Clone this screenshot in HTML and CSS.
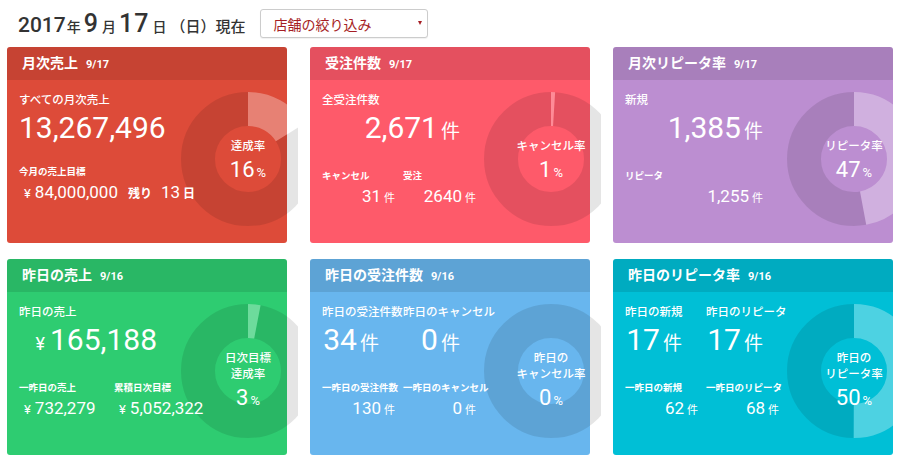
FILE: index.html
```html
<!DOCTYPE html>
<html lang="ja">
<head>
<meta charset="utf-8">
<title>ダッシュボード</title>
<link rel="stylesheet" href="styles.css">
</head>
<body>
<div class="page">
  <div class="topbar">
    <h1 class="today"><span class="d-num">2017</span><span class="d-unit">年</span><span class="d-big">9</span><span class="d-unit">月</span><span class="d-big">17</span><span class="d-unit">日</span><span class="d-tail">（日）現在</span></h1>
    <div class="shop-select"><span>店舗の絞り込み</span><span class="caret"></span></div>
  </div>

  <div class="grid">
    <!-- 1 -->
    <section class="card c-red">
      <header class="card-head"><span class="ttl">月次売上</span><span class="dt">9/17</span></header>
      <div class="card-body">
        <div class="stats">
          <div class="lbl">すべての月次売上</div>
          <div class="big">13,267,496</div>
          <div class="sub-lbl">今月の売上目標</div>
          <div class="sub-val l"><span class="yen-s">¥</span><span>84,000,000</span><span class="ub rest">残り</span><span>13</span><span class="ub day">日</span></div>
        </div>
        <div class="chart">
          <div class="ring">
            <svg viewBox="0 0 134 134" width="134" height="134">
              <circle class="seg-dark" cx="67" cy="67" r="50" stroke-dasharray="263.89 314.16" stroke-dashoffset="-50.27" transform="rotate(-90 67 67)"/>
              <circle class="seg-light" cx="67" cy="67" r="50" stroke-dasharray="50.27 314.16" transform="rotate(-90 67 67)"/>
            </svg>
            <div class="ring-label"><div class="rl-t">達成率</div><div class="rl-v">16<small>%</small></div></div>
          </div>
        </div>
      </div>
    </section>

    <!-- 2 -->
    <section class="card c-pink">
      <header class="card-head"><span class="ttl">受注件数</span><span class="dt">9/17</span></header>
      <div class="card-body">
        <div class="stats">
          <div class="lbl">全受注件数</div>
          <div class="big">2,671<span class="u">件</span></div>
          <div class="cols">
            <div class="sub-lbl">キャンセル</div>
            <div class="sub-lbl">受注</div>
            <div class="sub-val">31<span class="u">件</span></div>
            <div class="sub-val">2640<span class="u">件</span></div>
          </div>
        </div>
        <div class="chart">
          <div class="ring">
            <svg viewBox="0 0 134 134" width="134" height="134">
              <circle class="seg-dark" cx="67" cy="67" r="50" stroke-dasharray="311.02 314.16" stroke-dashoffset="-3.14" transform="rotate(-90 67 67)"/>
              <circle class="seg-light" cx="67" cy="67" r="50" stroke-dasharray="3.14 314.16" transform="rotate(-90 67 67)"/>
            </svg>
            <div class="ring-label"><div class="rl-t">キャンセル率</div><div class="rl-v">1<small>%</small></div></div>
          </div>
        </div>
      </div>
    </section>

    <!-- 3 -->
    <section class="card c-purple">
      <header class="card-head"><span class="ttl">月次リピータ率</span><span class="dt">9/17</span></header>
      <div class="card-body">
        <div class="stats">
          <div class="lbl">新規</div>
          <div class="big">1,385<span class="u">件</span></div>
          <div class="sub-lbl">リピータ</div>
          <div class="sub-val r">1,255<span class="u">件</span></div>
        </div>
        <div class="chart">
          <div class="ring">
            <svg viewBox="0 0 134 134" width="134" height="134">
              <circle class="seg-dark" cx="67" cy="67" r="50" stroke-dasharray="166.50 314.16" stroke-dashoffset="-147.65" transform="rotate(-90 67 67)"/>
              <circle class="seg-light" cx="67" cy="67" r="50" stroke-dasharray="147.65 314.16" transform="rotate(-90 67 67)"/>
            </svg>
            <div class="ring-label"><div class="rl-t">リピータ率</div><div class="rl-v">47<small>%</small></div></div>
          </div>
        </div>
      </div>
    </section>

    <!-- 4 -->
    <section class="card c-green">
      <header class="card-head"><span class="ttl">昨日の売上</span><span class="dt">9/16</span></header>
      <div class="card-body">
        <div class="stats">
          <div class="lbl">昨日の売上</div>
          <div class="big"><span class="yen-b">¥</span>165,188</div>
          <div class="cols cols-wide">
            <div class="sub-lbl">一昨日の売上</div>
            <div class="sub-lbl">累積日次目標</div>
            <div class="sub-val l"><span class="yen-s">¥</span>732,279</div>
            <div class="sub-val l"><span class="yen-s">¥</span>5,052,322</div>
          </div>
        </div>
        <div class="chart">
          <div class="ring">
            <svg viewBox="0 0 134 134" width="134" height="134">
              <circle class="seg-dark" cx="67" cy="67" r="50" stroke-dasharray="304.73 314.16" stroke-dashoffset="-9.42" transform="rotate(-90 67 67)"/>
              <circle class="seg-light" cx="67" cy="67" r="50" stroke-dasharray="9.42 314.16" transform="rotate(-90 67 67)"/>
            </svg>
            <div class="ring-label"><div class="rl-t">日次目標<br>達成率</div><div class="rl-v">3<small>%</small></div></div>
          </div>
        </div>
      </div>
    </section>

    <!-- 5 -->
    <section class="card c-blue">
      <header class="card-head"><span class="ttl">昨日の受注件数</span><span class="dt">9/16</span></header>
      <div class="card-body">
        <div class="stats">
          <div class="cols">
            <div class="lbl">昨日の受注件数</div>
            <div class="lbl">昨日のキャンセル</div>
            <div class="big">34<span class="u">件</span></div>
            <div class="big">0<span class="u">件</span></div>
            <div class="sub-lbl">一昨日の受注件数</div>
            <div class="sub-lbl">一昨日のキャンセル</div>
            <div class="sub-val">130<span class="u">件</span></div>
            <div class="sub-val">0<span class="u">件</span></div>
          </div>
        </div>
        <div class="chart">
          <div class="ring">
            <svg viewBox="0 0 134 134" width="134" height="134">
              <circle class="seg-dark" cx="67" cy="67" r="50"/>
            </svg>
            <div class="ring-label"><div class="rl-t">昨日の<br>キャンセル率</div><div class="rl-v">0<small>%</small></div></div>
          </div>
        </div>
      </div>
    </section>

    <!-- 6 -->
    <section class="card c-cyan">
      <header class="card-head"><span class="ttl">昨日のリピータ率</span><span class="dt">9/16</span></header>
      <div class="card-body">
        <div class="stats">
          <div class="cols">
            <div class="lbl">昨日の新規</div>
            <div class="lbl">昨日のリピータ</div>
            <div class="big">17<span class="u">件</span></div>
            <div class="big">17<span class="u">件</span></div>
            <div class="sub-lbl">一昨日の新規</div>
            <div class="sub-lbl">一昨日のリピータ</div>
            <div class="sub-val">62<span class="u">件</span></div>
            <div class="sub-val">68<span class="u">件</span></div>
          </div>
        </div>
        <div class="chart">
          <div class="ring">
            <svg viewBox="0 0 134 134" width="134" height="134">
              <circle class="seg-dark" cx="67" cy="67" r="50" stroke-dasharray="157.08 314.16" stroke-dashoffset="-157.08" transform="rotate(-90 67 67)"/>
              <circle class="seg-light" cx="67" cy="67" r="50" stroke-dasharray="157.08 314.16" transform="rotate(-90 67 67)"/>
            </svg>
            <div class="ring-label"><div class="rl-t">昨日の<br>リピータ率</div><div class="rl-v">50<small>%</small></div></div>
          </div>
        </div>
      </div>
    </section>
  </div>
</div>
</body>
</html>
```

FILE: styles.css
```css
* { box-sizing: border-box; }

body {
  margin: 0;
  background: #fff;
  color: #333;
  font-family: Roboto, "Noto Sans CJK JP", sans-serif;
}

.page {
  padding: 0 7px;
}

/* ---------- top bar ---------- */
.topbar {
  height: 47px;
  display: flex;
  align-items: center;
  gap: 15px;
  padding-left: 11px;
}

.today {
  margin: 0;
  display: flex;
  align-items: baseline;
  font-weight: 500;
  line-height: 1;
  color: #333;
  white-space: nowrap;
}

.d-num { font-size: 21px; }
.d-unit { font-size: 14px; margin: 0 1px; }
.d-big { font-size: 25px; margin: 0 2px; letter-spacing: 1px; }
.d-tail { font-size: 15px; margin-left: 3px; }

.shop-select {
  width: 168px;
  height: 29px;
  border: 1px solid #ccc;
  border-radius: 3px;
  box-shadow: 0 1px 1px rgba(0, 0, 0, 0.06);
  display: flex;
  align-items: center;
  justify-content: space-between;
  padding: 0 5px 0 12px;
  font-size: 14px;
  color: #a61e24;
  background: #fff;
}

.caret {
  width: 0;
  height: 0;
  border-left: 2.5px solid transparent;
  border-right: 2.5px solid transparent;
  border-top: 4px solid #a61e24;
  margin-top: -2px;
}

/* ---------- grid ---------- */
.grid {
  display: grid;
  grid-template-columns: repeat(3, 280px);
  grid-template-rows: repeat(2, 196px);
  column-gap: 23px;
  row-gap: 16px;
}

.card {
  border-radius: 3px;
  color: #fff;
  display: flex;
  flex-direction: column;
}

.c-red    { background: #dd4b39; }
.c-pink   { background: #fe5a6a; }
.c-purple { background: #bc8ed1; }
.c-green  { background: #2ecc71; }
.c-blue   { background: #68b6ee; }
.c-cyan   { background: #00bfd6; }

.card-head {
  height: 33px;
  flex: none;
  background: rgba(0, 0, 0, 0.1);
  border-radius: 3px 3px 0 0;
  display: flex;
  align-items: baseline;
  gap: 8px;
  padding-left: 15px;
  line-height: 33px;
}

.ttl { font-size: 14px; font-weight: 700; }
.dt  { font-size: 11px; font-weight: 700; }

.card-body {
  flex: 1;
  display: flex;
}

/* ---------- stats ---------- */
.stats {
  width: 174px;
  flex: none;
  padding: 12px 0 0 12px;
  position: relative;
  z-index: 1;
  white-space: nowrap;
}

.lbl {
  font-size: 11.5px;
  line-height: 16px;
  font-weight: 500;
}

.big {
  font-size: 30px;
  line-height: 40px;
  text-align: right;
  padding-right: 24px;
}

.big .u { font-size: 19px; margin-left: 3px; }
.yen-b { font-size: 18px; margin-right: 5px; }

.sub-lbl {
  font-size: 9.5px;
  line-height: 16px;
  font-weight: 700;
  margin-top: 16px;
}

.sub-val {
  font-size: 17px;
  line-height: 24px;
}

.sub-val .u { font-size: 11px; margin-left: 3px; }
.sub-val.l { padding-left: 5px; text-align: left; }
.sub-val.r { text-align: right; padding-right: 24px; }

.yen-s { font-size: 13px; margin-right: 4px; }
.ub { font-size: 12px; font-weight: 700; }
.ub.rest { margin: 0 9px 0 10px; }
.ub.day { margin-left: 3px; }

.cols {
  display: grid;
  grid-template-columns: 81px 81px;
}

.cols .sub-val { text-align: right; padding-right: 8px; }
.cols .sub-val.l { text-align: left; padding-right: 0; padding-left: 5px; }

.cols-wide {
  grid-template-columns: 95px auto;
}

/* ---------- donut ---------- */
.chart {
  width: 117px;
  flex: none;
  margin-right: -11px;
  padding-top: 12px;
  overflow: hidden;
}

.ring {
  position: relative;
  width: 134px;
  height: 134px;
}

.ring svg {
  display: block;
}

.ring circle {
  fill: none;
  stroke-width: 34;
}

.seg-dark  { stroke: rgba(0, 0, 0, 0.1); }
.seg-light { stroke: rgba(255, 255, 255, 0.3); }

.ring-label {
  position: absolute;
  left: 0;
  top: 46px;
  width: 134px;
  text-align: center;
  white-space: nowrap;
}

.rl-t {
  font-size: 11.5px;
  line-height: 16px;
  font-weight: 500;
}

.rl-v {
  font-size: 22px;
  line-height: 32px;
}

.rl-v small {
  font-size: 13px;
  margin-left: 2px;
}
```
